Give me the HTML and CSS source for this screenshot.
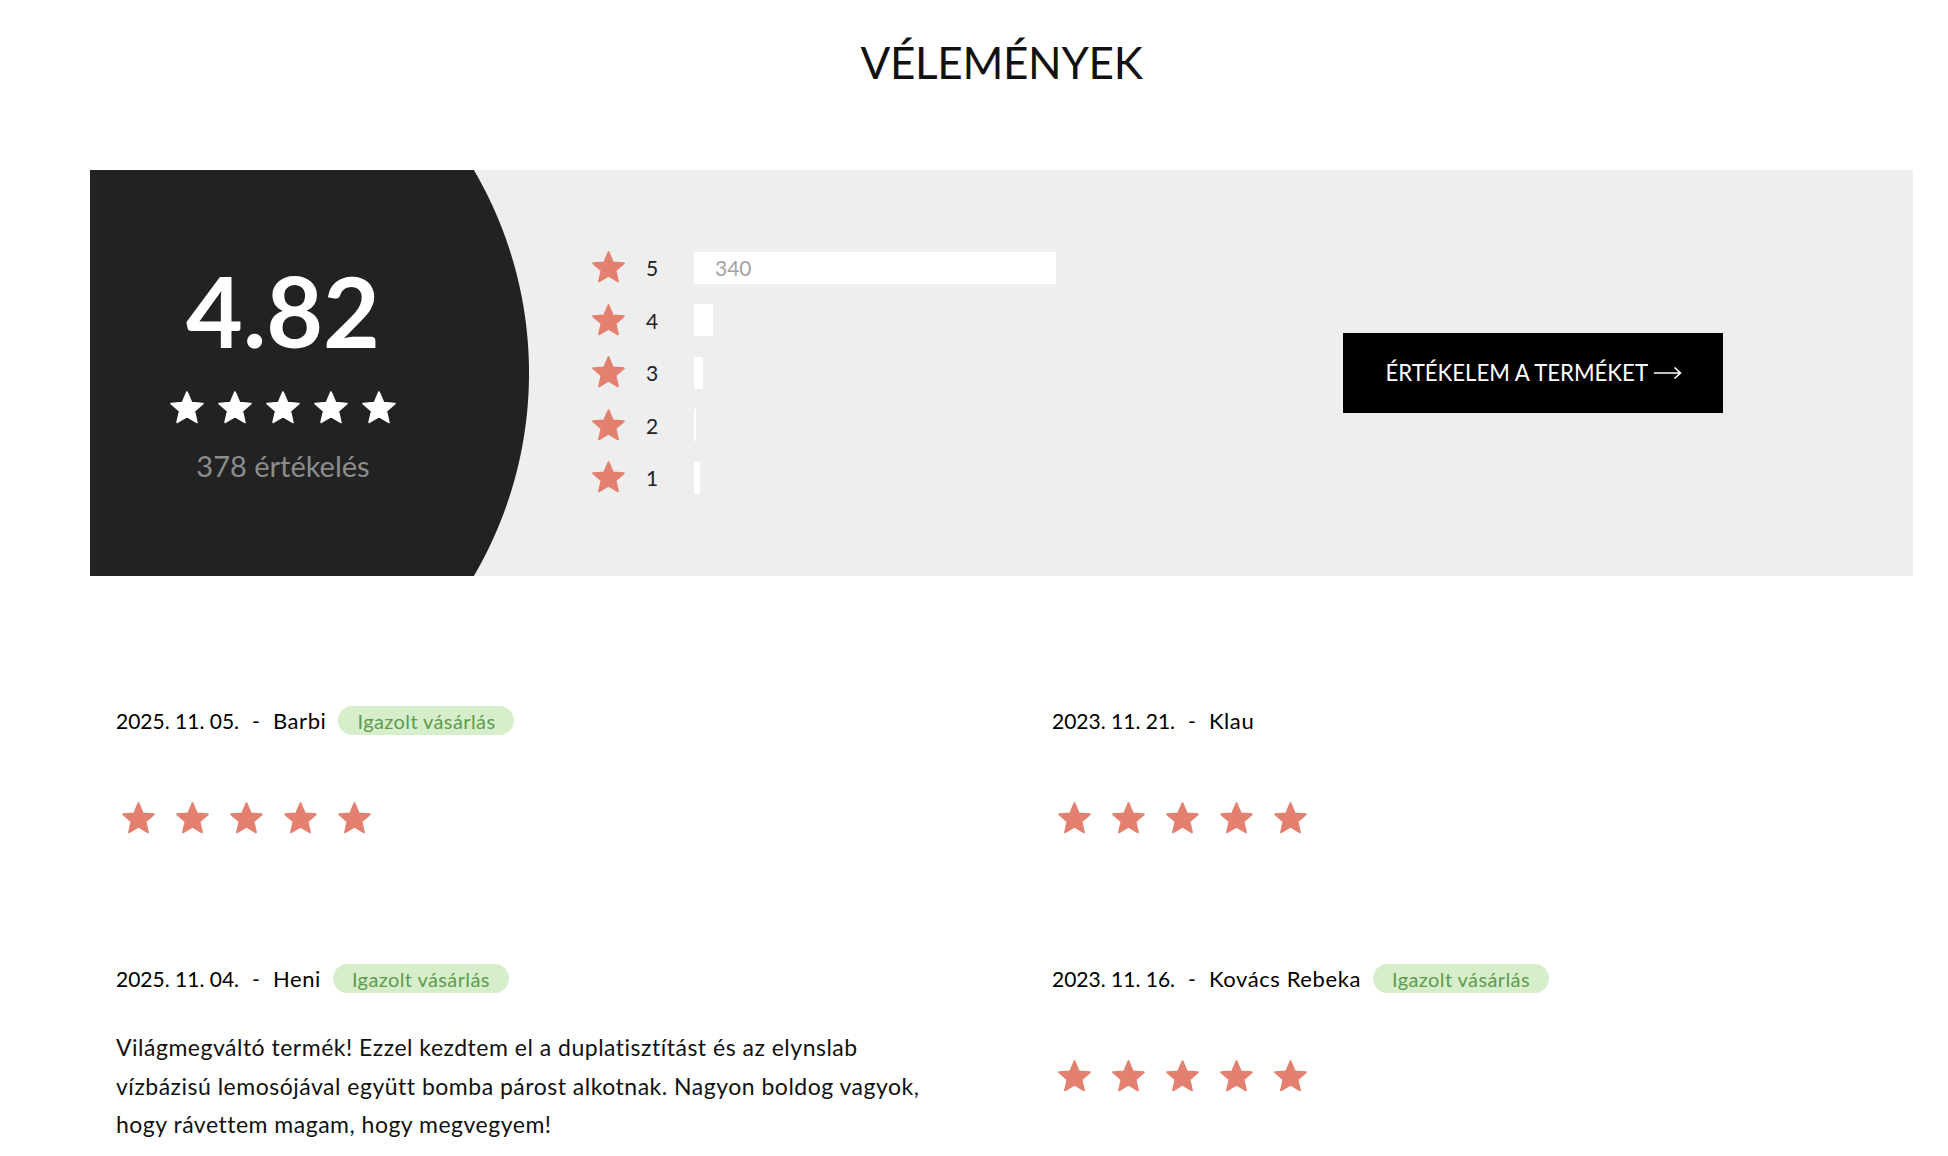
FILE: index.html
```html
<!DOCTYPE html>
<html lang="hu">
<head>
<meta charset="utf-8">
<title>Vélemények</title>
<link rel="stylesheet" href="styles.css">
</head>
<body>
<svg class="defs" aria-hidden="true">
  <symbol id="star" viewBox="0 0 24 24">
    <path d="M12 17.27L18.18 21l-1.64-7.03L22 9.24l-7.19-.61L12 2 9.19 8.63 2 9.24l5.46 4.73L5.82 21z" stroke-linejoin="round" stroke-width="1.2" stroke="currentColor" fill="currentColor"/>
  </symbol>
</svg>
<main class="page">
  <h1 class="title">VÉLEMÉNYEK</h1>

  <section class="summary">
    <div class="score">
      <div class="score-value">4.82</div>
      <div class="score-stars">
        <svg class="score-star"><use href="#star"/></svg>
        <svg class="score-star"><use href="#star"/></svg>
        <svg class="score-star"><use href="#star"/></svg>
        <svg class="score-star"><use href="#star"/></svg>
        <svg class="score-star"><use href="#star"/></svg>
      </div>
      <div class="score-count">378 értékelés</div>
    </div>

    <ul class="dist">
      <li class="dist-row">
        <svg class="dist-star"><use href="#star"/></svg>
        <span class="dist-num">5</span>
        <div class="bar-track"><div class="bar-fill" style="width:90%"><span class="bar-count">340</span></div></div>
      </li>
      <li class="dist-row">
        <svg class="dist-star"><use href="#star"/></svg>
        <span class="dist-num">4</span>
        <div class="bar-track"><div class="bar-fill" style="width:4.7%"></div></div>
      </li>
      <li class="dist-row">
        <svg class="dist-star"><use href="#star"/></svg>
        <span class="dist-num">3</span>
        <div class="bar-track"><div class="bar-fill" style="width:2.2%"></div></div>
      </li>
      <li class="dist-row">
        <svg class="dist-star"><use href="#star"/></svg>
        <span class="dist-num">2</span>
        <div class="bar-track"><div class="bar-fill" style="width:0.5%"></div></div>
      </li>
      <li class="dist-row">
        <svg class="dist-star"><use href="#star"/></svg>
        <span class="dist-num">1</span>
        <div class="bar-track"><div class="bar-fill" style="width:1.5%"></div></div>
      </li>
    </ul>

    <div class="cta-wrap">
      <a class="cta" href="#">ÉRTÉKELEM A TERMÉKET
        <svg class="cta-arrow" viewBox="0 0 28 14"><path d="M0 7H26.5M20.5 1.5L26.5 7L20.5 12.5"/></svg>
      </a>
    </div>
  </section>

  <section class="reviews">
    <article class="review">
      <div class="review-head">
        <span class="review-date">2025. 11. 05.</span><span class="review-sep">-</span><span class="review-name">Barbi</span>
        <span class="badge">Igazolt vásárlás</span>
      </div>
      <div class="review-stars">
        <svg class="review-star"><use href="#star"/></svg>
        <svg class="review-star"><use href="#star"/></svg>
        <svg class="review-star"><use href="#star"/></svg>
        <svg class="review-star"><use href="#star"/></svg>
        <svg class="review-star"><use href="#star"/></svg>
      </div>
    </article>

    <article class="review">
      <div class="review-head">
        <span class="review-date">2023. 11. 21.</span><span class="review-sep">-</span><span class="review-name">Klau</span>
      </div>
      <div class="review-stars">
        <svg class="review-star"><use href="#star"/></svg>
        <svg class="review-star"><use href="#star"/></svg>
        <svg class="review-star"><use href="#star"/></svg>
        <svg class="review-star"><use href="#star"/></svg>
        <svg class="review-star"><use href="#star"/></svg>
      </div>
    </article>

    <article class="review">
      <div class="review-head">
        <span class="review-date">2025. 11. 04.</span><span class="review-sep">-</span><span class="review-name">Heni</span>
        <span class="badge">Igazolt vásárlás</span>
      </div>
      <p class="review-text">Világmegváltó termék! Ezzel kezdtem el a duplatisztítást és az elynslab vízbázisú lemosójával együtt bomba párost alkotnak. Nagyon boldog vagyok, hogy rávettem magam, hogy megvegyem!</p>
    </article>

    <article class="review">
      <div class="review-head">
        <span class="review-date">2023. 11. 16.</span><span class="review-sep">-</span><span class="review-name">Kovács Rebeka</span>
        <span class="badge">Igazolt vásárlás</span>
      </div>
      <div class="review-stars">
        <svg class="review-star"><use href="#star"/></svg>
        <svg class="review-star"><use href="#star"/></svg>
        <svg class="review-star"><use href="#star"/></svg>
        <svg class="review-star"><use href="#star"/></svg>
        <svg class="review-star"><use href="#star"/></svg>
      </div>
    </article>
  </section>
</main>
</body>
</html>
```

FILE: styles.css
```css
* { box-sizing: border-box; }

html, body {
  margin: 0;
  padding: 0;
  background: #ffffff;
}

body {
  font-family: "Lato", "Noto Sans", sans-serif;
  color: #111111;
}

.defs {
  display: none;
}

.page {
  padding: 0 35px 0 90px;
}

.title {
  margin: 35.5px 0 81.5px;
  font-size: 44px;
  font-weight: 400;
  line-height: 1.2;
  letter-spacing: -0.3px;
  text-align: center;
  color: #111111;
}

/* ---------- summary panel ---------- */
.summary {
  display: flex;
  align-items: center;
  height: 406px;
  background: radial-gradient(circle 401px at 38px 50%, #222222 400.5px, #eeeeee 401.5px);
}

.score {
  width: 386px;
  display: flex;
  flex-direction: column;
  align-items: center;
  padding-bottom: 1px;
}

.score-value {
  font-size: 98px;
  font-weight: 700;
  line-height: 1;
  color: #ffffff;
}

.score-stars {
  display: flex;
  gap: 10px;
  margin-top: 30px;
  color: #ffffff;
}

.score-star {
  width: 38px;
  height: 38px;
}

.score-count {
  margin-top: 22px;
  font-size: 29px;
  line-height: 1.2;
  color: #8c8c8c;
}

.dist {
  list-style: none;
  margin: 0 0 0 114px;
  padding: 0;
  display: flex;
  flex-direction: column;
  gap: 20.5px;
}

.dist-row {
  display: flex;
  align-items: center;
  height: 32px;
}

.dist-star {
  width: 37px;
  height: 37px;
  color: #e3806f;
}

.dist-num {
  width: 48px;
  margin-left: 19px;
  font-size: 21px;
  color: #222222;
}

.bar-track {
  width: 402px;
  height: 32px;
}

.bar-fill {
  height: 100%;
  background: #ffffff;
  display: flex;
  align-items: center;
}

.bar-count {
  padding-left: 21px;
  font-size: 21px;
  color: #a3a3a3;
}

.cta-wrap {
  flex: 1;
  display: flex;
  justify-content: flex-end;
  padding-right: 190px;
}

.cta {
  display: inline-flex;
  align-items: center;
  gap: 6px;
  height: 80px;
  padding: 0 41px 0 42px;
  background: #000000;
  color: #ffffff;
  font-size: 22.2px;
  font-weight: 400;
  text-decoration: none;
}

.cta-arrow {
  width: 28px;
  height: 14px;
  fill: none;
  stroke: #ffffff;
  stroke-width: 1.6;
}

/* ---------- reviews ---------- */
.reviews {
  display: grid;
  grid-template-columns: 1fr 1fr;
  column-gap: 49px;
  row-gap: 127px;
  margin-top: 130px;
  align-items: start;
}

.review {
  padding: 0 26px;
}

.review-head {
  display: flex;
  align-items: center;
  height: 30px;
  color: #000000;
}

.review-date {
  font-size: 21px;
}

.review-sep {
  margin: 0 13px;
  font-size: 21px;
}

.review-name {
  font-size: 22px;
  letter-spacing: 0.6px;
}

.badge {
  display: inline-flex;
  align-items: center;
  height: 29px;
  margin-left: 12px;
  padding: 0 19px;
  border-radius: 15px;
  background: #d6efca;
  color: #5e9b4f;
  font-size: 20px;
  letter-spacing: 0.4px;
}

.review-stars {
  display: flex;
  gap: 17px;
  margin-left: 4px;
  color: #e3806f;
}

.review-head + .review-stars {
  margin-top: 64px;
}

.review-star {
  width: 37px;
  height: 37px;
}

.review-text {
  margin: 34.5px 0 0;
  max-width: 845px;
  font-size: 23px;
  line-height: 38.5px;
  letter-spacing: 0.5px;
  color: #111111;
}
```
